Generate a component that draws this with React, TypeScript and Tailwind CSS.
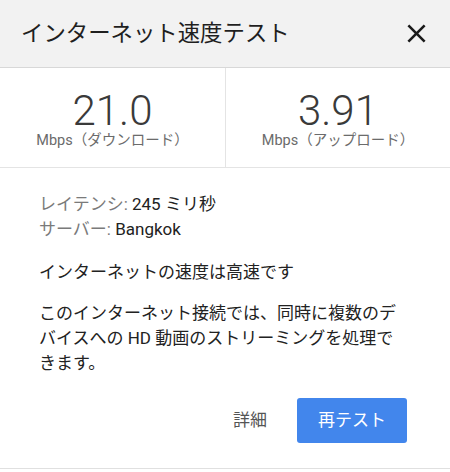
const font = { fontFamily: 'Roboto, "Noto Sans CJK JP", sans-serif' };

function CloseIcon() {
  return (
    <svg viewBox="0 0 24 24" className="h-[31px] w-[31px] fill-[#1a1a1a]">
      <path d="M19 6.41L17.59 5 12 10.59 6.41 5 5 6.41 10.59 12 5 17.59 6.41 19 12 13.41 17.59 19 19 17.59 13.41 12z" />
    </svg>
  );
}

interface StatProps {
  value: string;
  label: string;
  divider?: boolean;
}

function Stat({ value, label, divider }: StatProps) {
  return (
    <div
      className={`flex flex-col items-center pb-4 pt-[25px] ${divider ? 'border-l border-[#e4e4e4]' : ''}`}
    >
      <div className="text-[42px] font-light leading-[36px] text-[#3a3a3a]">{value}</div>
      <div className="mt-[2px] text-[14.5px] leading-[20px] text-[#6b6b6b]">{label}</div>
    </div>
  );
}

export default function App() {
  return (
    <div className="min-h-screen bg-white" style={font}>
      <div className="flex h-[68px] items-center justify-between border-b border-[#d8d8d8] bg-[#f2f2f2] pl-[21px] pr-[18px]">
        <h1 className="text-[22.4px] font-normal text-[#1f1f1f]">インターネット速度テスト</h1>
        <CloseIcon />
      </div>

      <div className="grid grid-cols-2 border-b border-[#e4e4e4]">
        <Stat value="21.0" label="Mbps（ダウンロード）" />
        <Stat value="3.91" label="Mbps（アップロード）" divider />
      </div>

      <div className="border-b border-[#e0e0e0] pb-[25px] pl-[39px] pr-[40px] pt-6 text-[17px] leading-[25px] text-[#222222]">
        <p>
          <span className="text-[#7a7a7a]">レイテンシ:</span> 245 ミリ秒
        </p>
        <p>
          <span className="text-[#7a7a7a]">サーバー:</span> Bangkok
        </p>
        <p className="mt-[18px]">インターネットの速度は高速です</p>
        <p className="mt-4">
          このインターネット接続では、同時に複数のデバイスへの HD 動画のストリーミングを処理できます。
        </p>
        <div className="mt-[22px] flex items-center justify-end gap-[30px] pr-[3px]">
          <button className="text-[17px] text-[#555555]">詳細</button>
          <button className="h-[45px] w-[110px] rounded-[3px] bg-[#4286ec] text-[17px] text-white">
            再テスト
          </button>
        </div>
      </div>
    </div>
  );
}
